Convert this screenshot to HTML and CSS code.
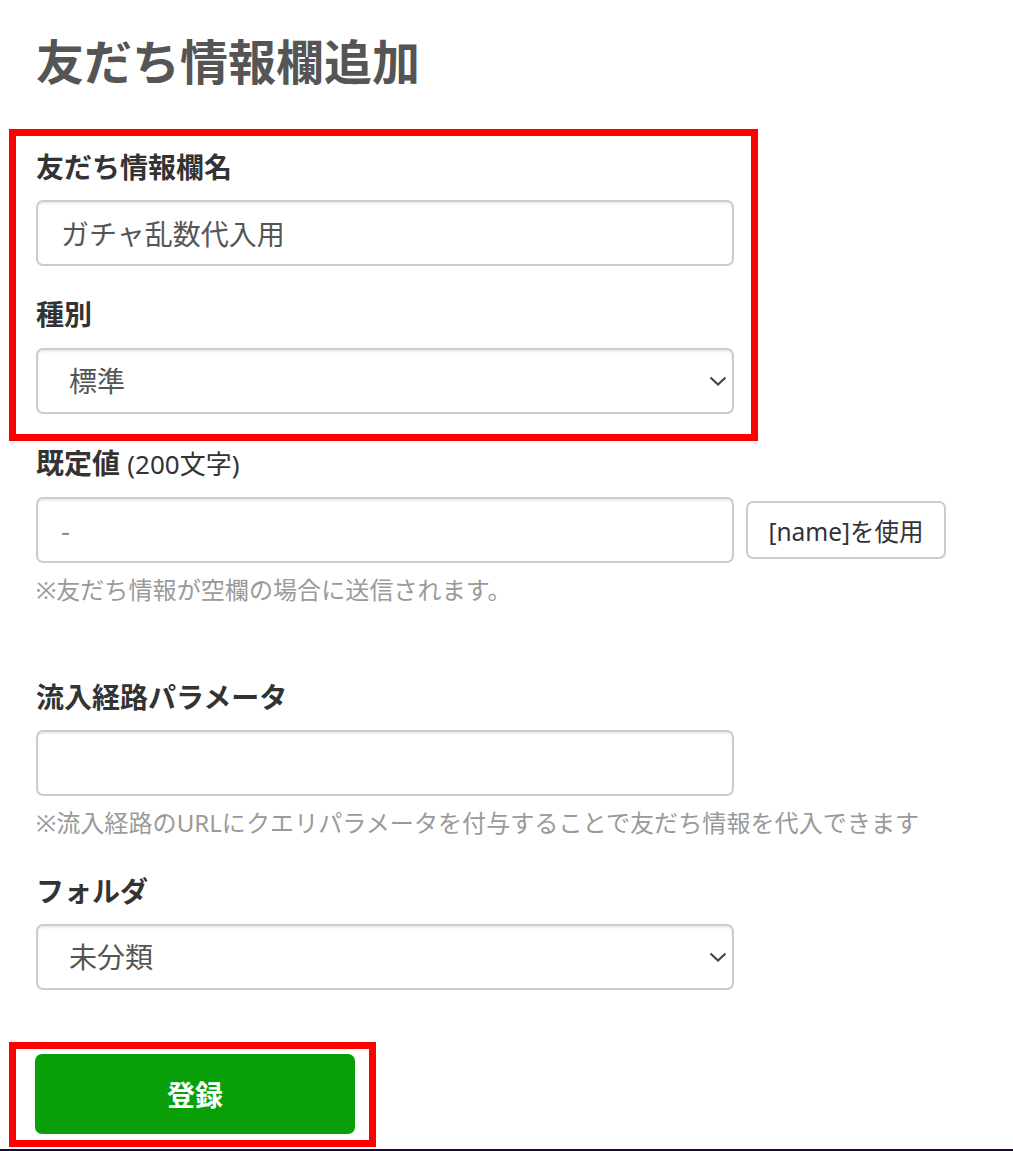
FILE: index.html
```html
<!DOCTYPE html>
<html lang="ja">
<head>
<meta charset="utf-8">
<title>友だち情報欄追加</title>
<link rel="stylesheet" href="styles.css">
</head>
<body>
<div class="page">
  <h1 class="title">友だち情報欄追加</h1>

  <div class="highlight hl-fields">
    <div class="field">
      <label class="label">友だち情報欄名</label>
      <input class="control" type="text" value="ガチャ乱数代入用">
    </div>
    <div class="field field-kind">
      <label class="label">種別</label>
      <div class="select-wrap">
        <select class="control select"><option>標準</option></select>
        <svg class="chevron" width="18" height="10" viewBox="0 0 18 10"><polyline points="1.5,1.5 9,8.5 16.5,1.5" fill="none" stroke="#444" stroke-width="2.2"/></svg>
      </div>
    </div>
  </div>

  <div class="field field-default">
    <label class="label">既定値 <span class="label-note">(200文字)</span></label>
    <div class="row">
      <input class="control" type="text" placeholder="-">
      <button class="btn-name" type="button">[name]を使用</button>
    </div>
    <p class="help">※友だち情報が空欄の場合に送信されます。</p>
  </div>

  <div class="field field-param">
    <label class="label">流入経路パラメータ</label>
    <input class="control" type="text">
    <p class="help">※流入経路のURLにクエリパラメータを付与することで友だち情報を代入できます</p>
  </div>

  <div class="field field-folder">
    <label class="label">フォルダ</label>
    <div class="select-wrap">
      <select class="control select"><option>未分類</option></select>
      <svg class="chevron" width="18" height="10" viewBox="0 0 18 10"><polyline points="1.5,1.5 9,8.5 16.5,1.5" fill="none" stroke="#444" stroke-width="2.2"/></svg>
    </div>
  </div>

  <div class="highlight hl-submit">
    <button class="btn-submit" type="button">登録</button>
  </div>
</div>
<div class="bottom-bar"></div>
</body>
</html>
```

FILE: styles.css
```css
* {
  box-sizing: border-box;
}

html, body {
  margin: 0;
  padding: 0;
  background: #ffffff;
}

body {
  font-family: "Noto Sans", "Noto Sans CJK JP", sans-serif;
  color: #333333;
  overflow: hidden;
}

.page {
  padding-left: 36px;
}

.title {
  margin: 0;
  padding-top: 33px;
  font-size: 48px;
  line-height: 58px;
  font-weight: bold;
  color: #555555;
}

.highlight {
  border: 7px solid #ff0000;
  margin-left: -27px;
}

.hl-fields {
  margin-top: 38px;
  width: 749px;
  padding: 11px 17px 20px 20px;
}

.hl-submit {
  margin-top: 52px;
  width: 367px;
  padding: 5px 14px 6px 19px;
}

.label {
  display: block;
  font-size: 28px;
  line-height: 40px;
  font-weight: bold;
  color: #333333;
  margin-bottom: 13px;
}

.label-note {
  font-weight: normal;
  font-size: 26px;
}

.field-kind {
  margin-top: 28px;
}

.field-kind .label {
  margin-bottom: 14px;
}

.field-default {
  margin-top: 2px;
}

.field-param {
  margin-top: 70px;
}

.field-folder {
  margin-top: 31px;
}

.control {
  display: block;
  width: 698px;
  height: 66px;
  margin: 0;
  padding: 0 23px;
  border: 2px solid #cccccc;
  border-radius: 7px;
  background: #ffffff;
  box-shadow: inset 0 2px 2px rgba(0, 0, 0, 0.075);
  font-family: inherit;
  font-size: 28px;
  color: #555555;
  outline: none;
}

.control::placeholder {
  color: #8f8f8f;
}

.select-wrap {
  position: relative;
  width: 698px;
}

.select {
  appearance: none;
  -webkit-appearance: none;
  padding-left: 31px;
  padding-right: 40px;
}

.chevron {
  position: absolute;
  right: 7px;
  top: 50%;
  transform: translateY(-50%);
  pointer-events: none;
}

.row {
  display: flex;
  align-items: center;
  gap: 12px;
}

.btn-name {
  width: 200px;
  height: 58px;
  border: 2px solid #cccccc;
  border-radius: 7px;
  background: #ffffff;
  font-family: inherit;
  font-size: 24.5px;
  color: #333333;
  padding: 0;
}

.help {
  margin: 10px 0 0;
  font-size: 24.1px;
  line-height: 34px;
  color: #9a9a9a;
  white-space: nowrap;
}

.btn-submit {
  display: block;
  width: 320px;
  height: 80px;
  border: none;
  border-radius: 7px;
  background: #089f08;
  color: #ffffff;
  font-family: inherit;
  font-size: 28px;
  font-weight: bold;
  padding: 0;
}

.bottom-bar {
  margin-top: 2px;
  height: 10px;
  background: #200a2f;
}
```
